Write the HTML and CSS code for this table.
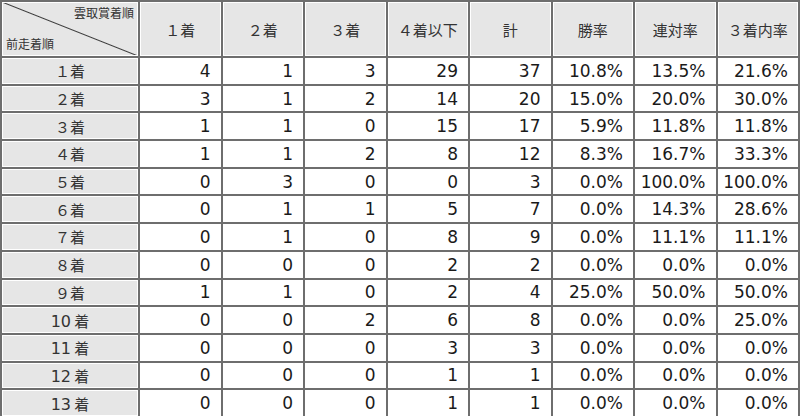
FILE: index.html
```html
<!DOCTYPE html>
<html lang="ja">
<head>
<meta charset="utf-8">
<link rel="stylesheet" href="styles.css">
</head>
<body>
<table class="stats">
  <colgroup>
    <col class="c-first">
    <col span="8" class="c-data">
  </colgroup>
  <thead>
    <tr class="head-row">
      <th class="corner">
        <div class="corner-inner">
          <span class="corner-top">雲取賞着順</span>
          <span class="corner-bottom">前走着順</span>
        </div>
      </th>
      <th>１着</th>
      <th>２着</th>
      <th>３着</th>
      <th>４着以下</th>
      <th>計</th>
      <th>勝率</th>
      <th>連対率</th>
      <th>３着内率</th>
    </tr>
  </thead>
  <tbody>
    <tr><th class="rowhead">１着</th><td>4</td><td>1</td><td>3</td><td>29</td><td>37</td><td>10.8%</td><td>13.5%</td><td>21.6%</td></tr>
    <tr><th class="rowhead">２着</th><td>3</td><td>1</td><td>2</td><td>14</td><td>20</td><td>15.0%</td><td>20.0%</td><td>30.0%</td></tr>
    <tr><th class="rowhead">３着</th><td>1</td><td>1</td><td>0</td><td>15</td><td>17</td><td>5.9%</td><td>11.8%</td><td>11.8%</td></tr>
    <tr><th class="rowhead">４着</th><td>1</td><td>1</td><td>2</td><td>8</td><td>12</td><td>8.3%</td><td>16.7%</td><td>33.3%</td></tr>
    <tr><th class="rowhead">５着</th><td>0</td><td>3</td><td>0</td><td>0</td><td>3</td><td>0.0%</td><td>100.0%</td><td>100.0%</td></tr>
    <tr><th class="rowhead">６着</th><td>0</td><td>1</td><td>1</td><td>5</td><td>7</td><td>0.0%</td><td>14.3%</td><td>28.6%</td></tr>
    <tr><th class="rowhead">７着</th><td>0</td><td>1</td><td>0</td><td>8</td><td>9</td><td>0.0%</td><td>11.1%</td><td>11.1%</td></tr>
    <tr><th class="rowhead">８着</th><td>0</td><td>0</td><td>0</td><td>2</td><td>2</td><td>0.0%</td><td>0.0%</td><td>0.0%</td></tr>
    <tr><th class="rowhead">９着</th><td>1</td><td>1</td><td>0</td><td>2</td><td>4</td><td>25.0%</td><td>50.0%</td><td>50.0%</td></tr>
    <tr><th class="rowhead"><span class="num">10</span> 着</th><td>0</td><td>0</td><td>2</td><td>6</td><td>8</td><td>0.0%</td><td>0.0%</td><td>25.0%</td></tr>
    <tr><th class="rowhead"><span class="num">11</span> 着</th><td>0</td><td>0</td><td>0</td><td>3</td><td>3</td><td>0.0%</td><td>0.0%</td><td>0.0%</td></tr>
    <tr><th class="rowhead"><span class="num">12</span> 着</th><td>0</td><td>0</td><td>0</td><td>1</td><td>1</td><td>0.0%</td><td>0.0%</td><td>0.0%</td></tr>
    <tr><th class="rowhead"><span class="num">13</span> 着</th><td>0</td><td>0</td><td>0</td><td>1</td><td>1</td><td>0.0%</td><td>0.0%</td><td>0.0%</td></tr>
  </tbody>
</table>
</body>
</html>
```

FILE: styles.css
```css
html, body {
  margin: 0;
  padding: 0;
  background: #ffffff;
}

body {
  font-family: "DejaVu Sans", "Noto Sans CJK JP", sans-serif;
  color: #1a1a1a;
}

.stats {
  width: 800px;
  border-collapse: collapse;
  table-layout: fixed;
}

.c-first {
  width: 138px;
}

.stats th,
.stats td {
  border: 2px solid #6e6e6e;
  padding: 0;
}

.stats th {
  background: #e6e6e6;
  box-shadow: inset 1px 1px 0 #ffffff, inset -1px -1px 0 #ffffff;
  font-weight: normal;
  font-family: "Noto Sans CJK JP", sans-serif;
  font-size: 15px;
  color: #333333;
  text-align: center;
}

.head-row {
  height: 56px;
}

.stats tbody tr {
  height: 27.7px;
}

.stats td {
  text-align: right;
  padding-right: 10px;
  font-size: 17px;
  line-height: 20px;
  color: #1a1a1a;
}

.stats th.rowhead {
  font-size: 15px;
}

.num {
  font-family: "DejaVu Sans", sans-serif;
  font-size: 16px;
}

.stats th.corner {
  background: linear-gradient(to top right, transparent calc(50% - 1px), #3a3a3a 50%, transparent calc(50% + 1px)), #e6e6e6;
  padding: 0;
}

.corner-inner {
  display: flex;
  flex-direction: column;
  justify-content: space-between;
  height: 52px;
  padding: 2px 4px 3px 4px;
  box-sizing: border-box;
  font-size: 12px;
  line-height: 16px;
}

.corner-top {
  text-align: right;
}

.corner-bottom {
  text-align: left;
}
```
